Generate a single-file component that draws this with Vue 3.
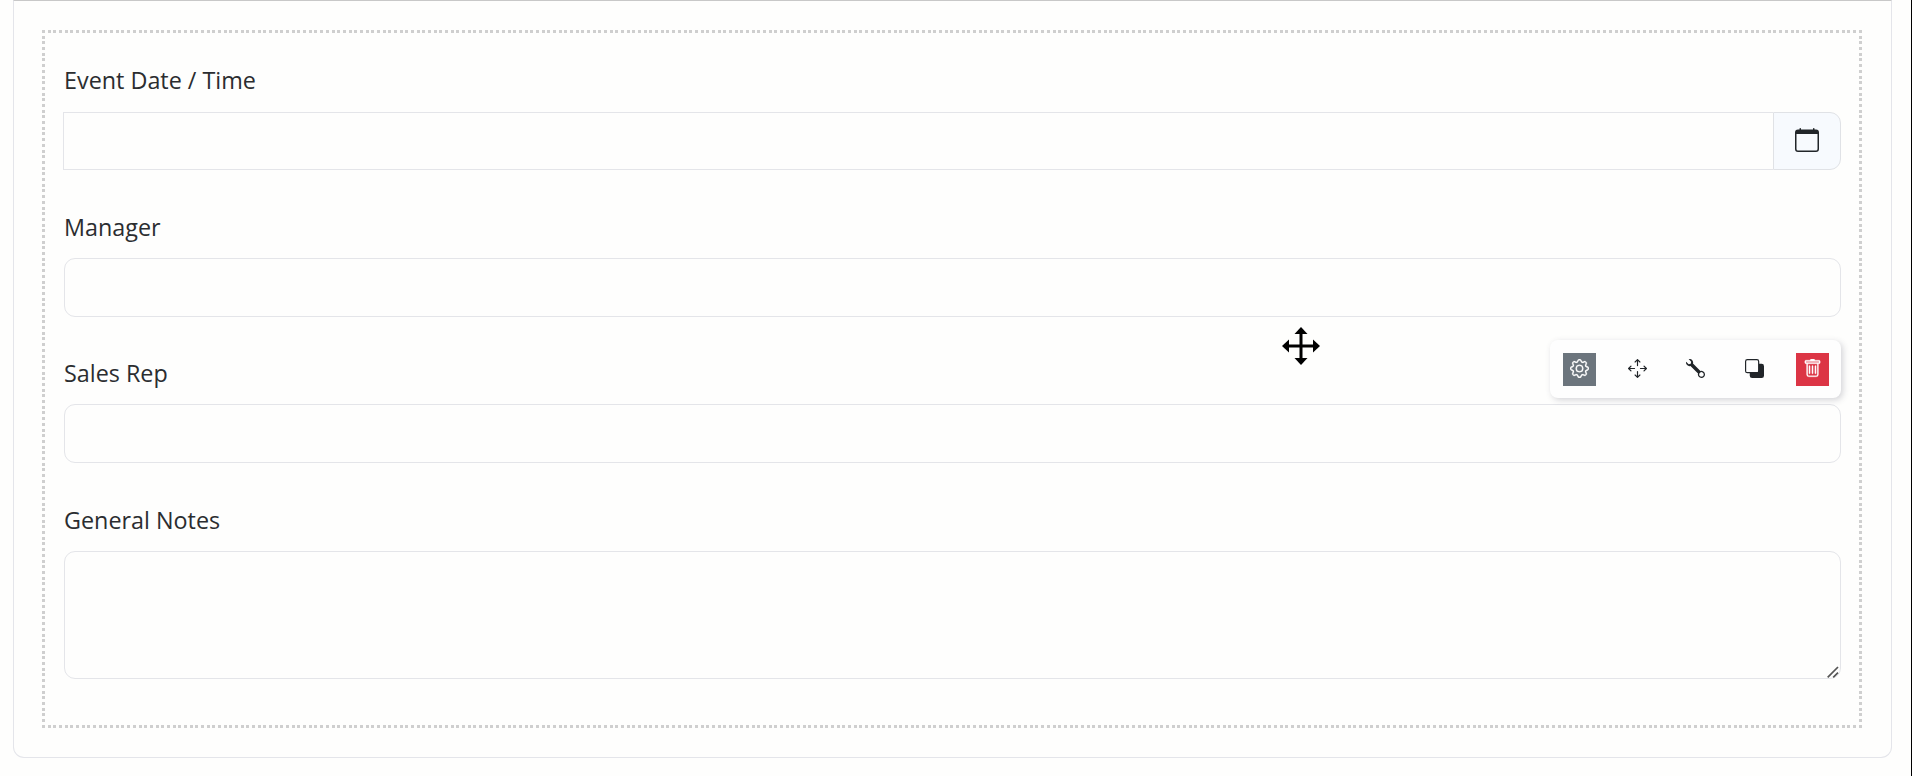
<template>
  <div class="page">
    <div class="card">
      <div class="drop-zone">
        <div v-for="field in fields" :key="field.key" class="field" :class="field.type">
          <label :for="field.key">{{ field.label }}</label>

          <div v-if="field.type === 'datetime'" class="input-group">
            <input :id="field.key" v-model="values[field.key]" type="text" />
            <button type="button" class="addon" aria-label="Open calendar">
              <svg width="24" height="24" viewBox="0 0 16 16" fill="currentColor">
                <path :d="icons.calendar" />
              </svg>
            </button>
          </div>

          <div v-else-if="field.type === 'textarea'" class="textarea-wrap">
            <textarea :id="field.key" v-model="values[field.key]"></textarea>
            <svg class="grip" width="12" height="12" viewBox="0 0 12 12">
              <path d="M0.7 11.3 11 1M6.2 11.3 11 6.6" />
            </svg>
          </div>

          <input v-else :id="field.key" v-model="values[field.key]" type="text" />

          <div v-if="field.key === activeField" class="toolbar">
            <button
              v-for="action in actions"
              :key="action.name"
              type="button"
              :class="action.name"
              :aria-label="action.name"
            >
              <svg width="19" height="19" viewBox="0 0 16 16" fill="currentColor">
                <path v-for="d in action.paths" :key="d" :d="d" fill-rule="evenodd" />
              </svg>
            </button>
          </div>
        </div>
      </div>
    </div>

    <svg class="pointer" width="40" height="40" viewBox="0 0 40 40">
      <path d="M20 3v34M3 20h34" />
      <polygon points="20,1 26.5,8 13.5,8" />
      <polygon points="20,39 26.5,32 13.5,32" />
      <polygon points="1,20 8,13.5 8,26.5" />
      <polygon points="39,20 32,13.5 32,26.5" />
    </svg>
  </div>
</template>

<script setup>
import { reactive, ref } from 'vue';

const fields = [
  { key: 'eventDate', label: 'Event Date / Time', type: 'datetime' },
  { key: 'manager', label: 'Manager', type: 'text' },
  { key: 'salesRep', label: 'Sales Rep', type: 'text' },
  { key: 'generalNotes', label: 'General Notes', type: 'textarea' }
];

const values = reactive({
  eventDate: '',
  manager: '',
  salesRep: '',
  generalNotes: ''
});

const activeField = ref('salesRep');

const icons = {
  calendar: 'M3.5 0a.5.5 0 0 1 .5.5V1h8V.5a.5.5 0 0 1 1 0V1h1a2 2 0 0 1 2 2v11a2 2 0 0 1-2 2H2a2 2 0 0 1-2-2V3a2 2 0 0 1 2-2h1V.5a.5.5 0 0 1 .5-.5zM1 4v10a1 1 0 0 0 1 1h12a1 1 0 0 0 1-1V4H1z'
};

const actions = [
  {
    name: 'settings',
    paths: [
      'M8 4.754a3.246 3.246 0 1 0 0 6.492 3.246 3.246 0 0 0 0-6.492zM5.754 8a2.246 2.246 0 1 1 4.492 0 2.246 2.246 0 0 1-4.492 0z',
      'M9.796 1.343c-.527-1.79-3.065-1.79-3.592 0l-.094.319a.873.873 0 0 1-1.255.52l-.292-.16c-1.64-.892-3.433.902-2.54 2.541l.159.292a.873.873 0 0 1-.52 1.255l-.319.094c-1.79.527-1.79 3.065 0 3.592l.319.094a.873.873 0 0 1 .52 1.255l-.16.292c-.892 1.64.901 3.434 2.541 2.54l.292-.159a.873.873 0 0 1 1.255.52l.094.319c.527 1.79 3.065 1.79 3.592 0l.094-.319a.873.873 0 0 1 1.255-.52l.292.16c1.64.893 3.434-.902 2.54-2.541l-.159-.292a.873.873 0 0 1 .52-1.255l.319-.094c1.79-.527 1.79-3.065 0-3.592l-.319-.094a.873.873 0 0 1-.52-1.255l.16-.292c.893-1.64-.902-3.433-2.541-2.54l-.292.159a.873.873 0 0 1-1.255-.52l-.094-.319zm-2.633.283c.246-.835 1.428-.835 1.674 0l.094.319a1.873 1.873 0 0 0 2.693 1.115l.291-.16c.764-.415 1.6.42 1.184 1.185l-.159.292a1.873 1.873 0 0 0 1.116 2.692l.318.094c.835.246.835 1.428 0 1.674l-.319.094a1.873 1.873 0 0 0-1.115 2.693l.16.291c.415.764-.42 1.6-1.185 1.184l-.291-.159a1.873 1.873 0 0 0-2.693 1.116l-.094.318c-.246.835-1.428.835-1.674 0l-.094-.319a1.873 1.873 0 0 0-2.692-1.115l-.292.16c-.764.415-1.6-.42-1.184-1.185l.159-.291A1.873 1.873 0 0 0 1.945 8.93l-.319-.094c-.835-.246-.835-1.428 0-1.674l.319-.094A1.873 1.873 0 0 0 3.06 4.377l-.16-.292c-.415-.764.42-1.6 1.185-1.184l.292.159a1.873 1.873 0 0 0 2.692-1.115l.094-.319z'
    ]
  },
  {
    name: 'move',
    paths: [
      'M7.646.146a.5.5 0 0 1 .708 0l2 2a.5.5 0 0 1-.708.708L8.5 1.707V5.5a.5.5 0 0 1-1 0V1.707L6.354 2.854a.5.5 0 1 1-.708-.708l2-2zM8 10a.5.5 0 0 1 .5.5v3.793l1.146-1.147a.5.5 0 0 1 .708.708l-2 2a.5.5 0 0 1-.708 0l-2-2a.5.5 0 0 1 .708-.708L7.5 14.293V10.5A.5.5 0 0 1 8 10zM.146 8.354a.5.5 0 0 1 0-.708l2-2a.5.5 0 1 1 .708.708L1.707 7.5H5.5a.5.5 0 0 1 0 1H1.707l1.147 1.146a.5.5 0 0 1-.708.708l-2-2zM10 8a.5.5 0 0 1 .5-.5h3.793l-1.147-1.146a.5.5 0 0 1 .708-.708l2 2a.5.5 0 0 1 0 .708l-2 2a.5.5 0 0 1-.708-.708L14.293 8.5H10.5A.5.5 0 0 1 10 8z'
    ]
  },
  {
    name: 'edit',
    paths: [
      'M.102 2.223A3.004 3.004 0 0 0 3.78 5.897l6.341 6.252A3.003 3.003 0 0 0 13 16a3 3 0 1 0-.851-5.878L5.897 3.781A3.004 3.004 0 0 0 2.223.1l2.141 2.142L4 4l-1.757.364L.102 2.223zm13.37 9.019.528.026.287.445.445.287.026.529L15 13l-.242.471-.026.529-.445.287-.287.445-.529.026L13 15l-.471-.242-.529-.026-.287-.445-.445-.287-.026-.529L11 13l.242-.471.026-.529.445-.287.287-.445.529-.026L13 11l.471.242z'
    ]
  },
  {
    name: 'copy',
    paths: [
      'M0 2a2 2 0 0 1 2-2h8a2 2 0 0 1 2 2v2h2a2 2 0 0 1 2 2v8a2 2 0 0 1-2 2H6a2 2 0 0 1-2-2v-2H2a2 2 0 0 1-2-2V2zm2-1a1 1 0 0 0-1 1v8a1 1 0 0 0 1 1h8a1 1 0 0 0 1-1V2a1 1 0 0 0-1-1H2z'
    ]
  },
  {
    name: 'remove',
    paths: [
      'M5.5 5.5A.5.5 0 0 1 6 6v6a.5.5 0 0 1-1 0V6a.5.5 0 0 1 .5-.5zm2.5 0a.5.5 0 0 1 .5.5v6a.5.5 0 0 1-1 0V6a.5.5 0 0 1 .5-.5zm3 .5a.5.5 0 0 0-1 0v6a.5.5 0 0 0 1 0V6z',
      'M14.5 3a1 1 0 0 1-1 1H13v9a2 2 0 0 1-2 2H5a2 2 0 0 1-2-2V4h-.5a1 1 0 0 1-1-1V2a1 1 0 0 1 1-1H6a1 1 0 0 1 1-1h2a1 1 0 0 1 1 1h3.5a1 1 0 0 1 1 1v1zM4.118 4 4 4.059V13a1 1 0 0 0 1 1h6a1 1 0 0 0 1-1V4.059L11.882 4H4.118zM2.5 3V2h11v1h-11z'
    ]
  }
];
</script>

<style>
body {
  margin: 0;
  background: #fefefd;
}
</style>

<style scoped>
* {
  box-sizing: border-box;
}

.page {
  position: relative;
  height: 776px;
  padding: 0 19px 0 13px;
  overflow: hidden;
  border-right: 1px solid #000;
  background: #fefefd;
  color: #2b2d30;
  font-family: 'Open Sans', sans-serif;
  font-size: 23.35px;
}

.card {
  height: 758px;
  padding: 29px 29px;
  border: 1px solid #e4e5ea;
  border-top-color: #c8c8c8;
  border-radius: 0 0 11px 11px;
}

/* square dots, drawn per side so that the spacing stays even */
.drop-zone {
  --dot: #cfcfcf;
  height: 698px;
  padding: 18px 21px 0 22px;
  margin-left: -1px;
  background:
    repeating-linear-gradient(90deg, var(--dot) 0 3px, transparent 3px 5.677px) top / 100% 3px no-repeat,
    repeating-linear-gradient(90deg, var(--dot) 0 3px, transparent 3px 5.677px) bottom / 100% 3px no-repeat,
    repeating-linear-gradient(180deg, var(--dot) 0 3px, transparent 3px 5.694px) left / 3px 100% no-repeat,
    repeating-linear-gradient(180deg, var(--dot) 0 3px, transparent 3px 5.694px) right / 3px 100% no-repeat;
}

.field {
  position: relative;
  height: 146.2px;
  padding-top: 14.4px;
}

label {
  display: block;
  margin-bottom: 13.6px;
  line-height: 36px;
}

.field.textarea {
  padding-top: 15.2px;
}

.field.textarea label {
  margin-bottom: 12.8px;
}

input,
textarea {
  display: block;
  width: 100%;
  height: 59px;
  padding: 9px 18px;
  border: 1px solid #e4e5e9;
  border-radius: 11px;
  outline: none;
  background: transparent;
  color: inherit;
  font: inherit;
}

textarea {
  height: 128px;
  resize: none;
}

.input-group {
  display: flex;
  margin-left: -1px;
}

.input-group input {
  flex: 1;
  height: 58px;
  border-right: 0;
  border-radius: 0;
}

.addon {
  display: flex;
  align-items: center;
  justify-content: center;
  width: 68px;
  padding: 0 0 2px;
  border: 1px solid #e0e2e6;
  border-radius: 0 11px 11px 0;
  background: #f7fafe;
  color: #212529;
}

.textarea-wrap {
  position: relative;
}

.grip {
  position: absolute;
  right: 2px;
  bottom: 1px;
  fill: none;
  stroke: #555;
  stroke-width: 1.7;
}

.toolbar {
  position: absolute;
  top: 0;
  right: 0;
  display: flex;
  gap: 25px;
  width: 291px;
  height: 58px;
  padding: 12.5px 12px 12px 12.5px;
  border-radius: 8px;
  background: #fefefe;
  box-shadow: 2px 2px 6px rgba(60, 60, 80, 0.22);
}

.toolbar button {
  display: flex;
  align-items: center;
  justify-content: center;
  width: 33.3px;
  height: 33px;
  padding: 0 0 2px;
  border: 0;
  background: transparent;
  color: #212529;
}

.toolbar .settings {
  background: #6c757d;
  color: #fff;
}

.toolbar .remove {
  background: #dc3545;
  color: #fff;
}

.toolbar .settings path,
.toolbar .remove path {
  stroke: currentColor;
  stroke-width: 0.25;
}

.pointer {
  position: absolute;
  top: 326px;
  left: 1281px;
  stroke: #000;
  stroke-width: 3;
}

.pointer polygon {
  stroke: none;
}
</style>
